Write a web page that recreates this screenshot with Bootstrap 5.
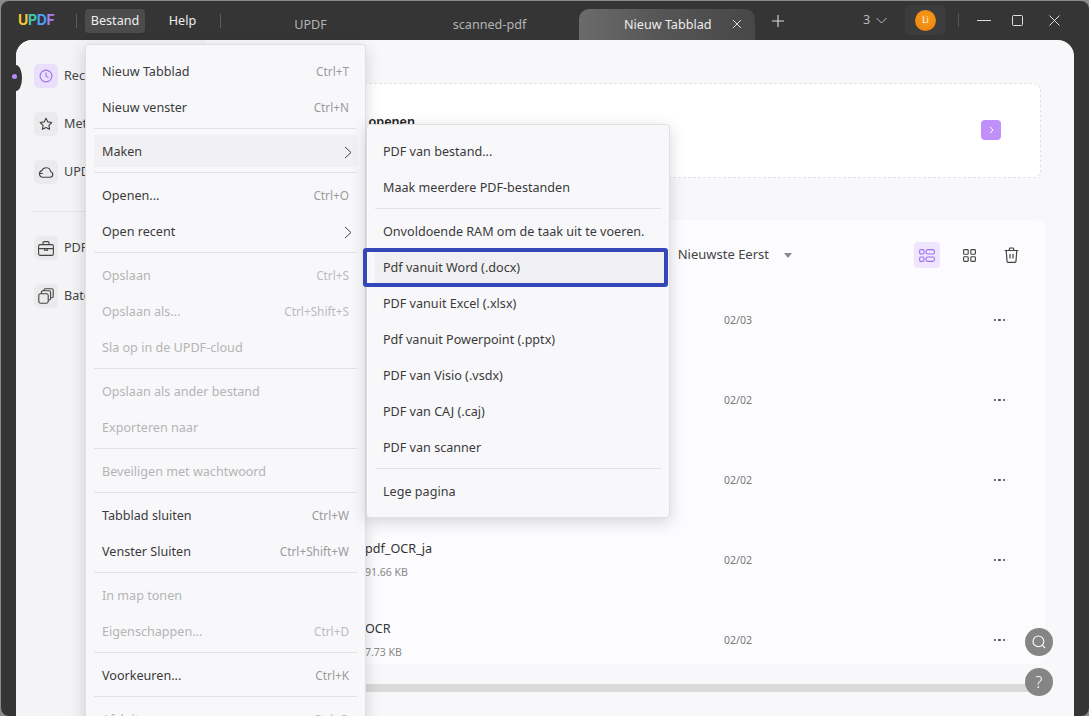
<!DOCTYPE html>
<html lang="nl">
<head>
<meta charset="utf-8">
<title>UPDF</title>
<link href="https://cdn.jsdelivr.net/npm/bootstrap@5.3.0/dist/css/bootstrap.min.css" rel="stylesheet">
<style>
html,body{height:716px;overflow:hidden}
body{background:#8b8b8b;font-family:"Noto Sans","Liberation Sans",sans-serif;font-size:12.6px;color:#333}
.win{height:715px;margin:1px 0 0 1px;background:#353535;border-radius:8px;position:relative;overflow:hidden}
.titlebar{height:39px;color:#e6e6e6}
.logo{width:84px;padding-left:17px;font-family:"Inter",sans-serif;font-weight:700;font-size:14px;letter-spacing:-.3px;padding-bottom:2px}
.lu{color:#f7c52d}.lp{color:#3fc9a6}.ld{color:#4e9ff0}.lf{color:#a77ff2}
.barcell{height:39px}
.vsep{width:1px;height:14px;background:#5c5c5c}
.vsep-logo{margin-left:-9px;margin-right:8px}
.menubtn{height:24px;border-radius:4px;color:#eee;padding-top:2px}
.menubtn-on{background:#4c4c4c;width:60px}
.menubtn-off{width:41px;margin-left:17px}
.sep-end{margin-left:17px}
.tabcell{height:31px;color:#b4b4b4;width:179px;margin-top:8px;padding-top:2px}
.tabcell-on{width:176px;color:#ededed;background:linear-gradient(90deg,#6b6b6b,#565656 45%,#474747);border-radius:10px 10px 0 0}
.tablabel{margin-left:45px}
.tabx{left:153px;top:10px}
.plus{margin:14px 0 0 17px}
.counter{margin-left:79px;height:39px;width:27px;color:#bbb}
.counter svg{margin-left:6px}
.avatar-tile{width:41px;height:30px;margin:4px 0 0 15px;background:#3c3c3c;border-radius:5px}
.avatar-dot{width:21px;height:21px;border-radius:50%;background:radial-gradient(circle at 50% 40%,#f49a1f,#ee8207);color:#fff;font-size:8px}
.sep-win{margin:12px 0 0 12px;background:#555}
.wmin{margin:14px 0 0 18px}
.wmax{margin:14px 0 0 21px}
.wclose{margin:14px 0 0 26px}
.pagebody{margin-left:15px;margin-right:15px;height:676px;background:#f8f8fa;border-radius:16px 16px 0 0;overflow:hidden}
.sidecol{width:190px;background:#f4f4f6;padding-top:24px}
.siderow{height:24px;margin:0 0 24px 18px;gap:6px;color:#444;white-space:nowrap}
.tile{width:24px;height:24px;border-radius:5px;background:#ebebed}
.tile-on{background:#eadffb}
.siderule{height:1px;background:#e6e6e8;margin:27px 24px 24px 16px}
.notch{position:absolute;left:15px;top:64px;width:6px;height:26px;background:#353535;border-radius:0 100% 100% 0/0 50% 50% 0}
.notchdot{position:absolute;left:11px;top:73px;width:5px;height:5px;border-radius:50%;background:#b78af5}
.maincol{padding:43px 33px 0 0}
.dropbox{height:95px;background:#fff;border:1px dashed #e1e1e4;border-radius:8px;padding-right:39px}
.dropbox-title{padding-left:108px;font-weight:600;padding-bottom:17px;color:#222}
.gobtn{width:20px;height:20px;border-radius:4px;background:#c08ffa;color:#fff;margin-bottom:2px}
.listcard{margin-top:42px;margin-right:-4px;height:444px;background:#fcfcfe;border-radius:8px;padding:22px 21px 0 0}
.toolrow{height:26px}
.sorter{margin-right:106px;color:#444;font-size:13px}
.caret-tri{width:0;height:0;border:4px solid transparent;border-top:5px solid #8a8a8a;border-bottom:0;margin-left:15px}
.tool{width:26px;height:26px;border-radius:4px;margin-left:16px}
.tool-on{background:#efe6fd}
.rowgap{height:12px}
.filerow{height:80px;padding-right:19px}
.fname{width:518px;flex-shrink:0;padding-left:159px;color:#333;line-height:1}
.fsize{margin-top:11px;font-size:10.5px;color:#888}
.fdate{font-size:10.5px;color:#777;flex:1;padding-top:2px}
.dots{width:11px;height:3px;flex-shrink:0;justify-content:space-between}
.dots i{display:block;width:2.4px;height:2.4px;background:#444;border-radius:50%}
.scrolltrack{height:8px;background:#dadada;margin-top:20px;margin-right:12px}
.floatbtn{position:absolute;left:1024px;width:28px;height:28px;border-radius:50%;background:#858585;color:#fff;font-size:16px;font-weight:300}
.fb-search{top:627px}
.fb-help{top:667px}
.appmenu.dropdown-menu{display:block;position:absolute;border:1px solid #e0e0e4;border-radius:4px;background:#f8f8fb;box-shadow:0 4px 16px rgba(0,0,0,.16);min-width:0;margin:0;color:#3a3a3a}
.m-file{left:84px;top:43px;width:281px;height:700px;padding:8px}
.m-make{left:365px;top:123px;width:304px;padding:8px;z-index:1001}
.appmenu .dropdown-item{height:36px;padding:2px 8px 0;display:flex;align-items:center;justify-content:space-between;color:#3a3a3a;border-radius:4px;font-size:12.6px;background:transparent}
.appmenu .dropdown-item.disabled{color:#b4b4b4}
.appmenu .item-hover{background:linear-gradient(#f8f8fb 2px,#f1f1f3 2px,#f1f1f3 34px,#f8f8fb 34px)}
.appmenu .dropdown-divider{margin:3px 0 4px;border-top:1px solid #e3e3e6;opacity:1}
.keys{font-size:11.8px;color:#9b9b9b}
.disabled .keys{color:#bbb}
.chev{margin-right:-3px}
.appmenu .item-mark{position:relative;background:#f0f0f2;border-radius:0;width:calc(100% + 3px)}
.bluebox{position:absolute;left:-12px;right:-4px;top:-1px;bottom:-2px;border:4px solid #3547b8;border-radius:3px;pointer-events:none}
svg{display:block}
</style>
</head>
<body>
<div class="win">
  <div class="titlebar d-flex align-items-start">
    <div class="barcell d-flex align-items-center">
      <div class="logo"><span class="lu">U</span><span class="lp">P</span><span class="ld">D</span><span class="lf">F</span></div>
    </div>
    <div class="barcell d-flex align-items-center">
      <div class="vsep vsep-logo"></div>
      <div class="menubtn menubtn-on d-flex align-items-center justify-content-center">Bestand</div>
      <div class="menubtn menubtn-off d-flex align-items-center justify-content-center">Help</div>
      <div class="vsep sep-end"></div>
    </div>
    <div class="tabcell d-flex align-items-center justify-content-center">UPDF</div>
    <div class="tabcell d-flex align-items-center justify-content-center">scanned-pdf</div>
    <div class="tabcell tabcell-on d-flex align-items-center position-relative">
      <span class="tablabel">Nieuw Tabblad</span>
      <svg class="position-absolute tabx" width="10" height="10" viewBox="0 0 10 10" fill="none" stroke="#ddd" stroke-width="1"><path d="M1 1l8 8M9 1l-8 8"/></svg>
    </div>
    <svg class="plus" width="12" height="12" viewBox="0 0 12 12" fill="none" stroke="#ddd" stroke-width="1.1"><path d="M6 0v12M0 6h12"/></svg>
    <div class="counter d-flex align-items-center">3
      <svg width="11" height="7" viewBox="0 0 11 7" fill="none" stroke="#bbb"><path d="M.5 1l5 5 5-5"/></svg>
    </div>
    <div class="avatar-tile d-flex align-items-center justify-content-center"><div class="avatar-dot d-flex align-items-center justify-content-center">Li</div></div>
    <div class="vsep sep-win"></div>
    <svg class="wmin" width="14" height="12" viewBox="0 0 14 12" fill="none" stroke="#ddd"><path d="M0 5.5h14"/></svg>
    <svg class="wmax" width="11" height="11" viewBox="0 0 11 11" fill="none" stroke="#ddd"><rect x=".5" y=".5" width="10" height="10" rx="1"/></svg>
    <svg class="wclose" width="11" height="11" viewBox="0 0 11 11" fill="none" stroke="#ddd"><path d="M.5.5l10 10M10.5.5l-10 10"/></svg>
  </div>

  <div class="pagebody d-flex">
    <div class="sidecol flex-shrink-0">
      <div class="siderow d-flex align-items-center"><div class="tile tile-on d-flex align-items-center justify-content-center"><svg width="14" height="14" viewBox="0 0 14 14" fill="none" stroke="#a06ff0" stroke-width="1.1"><circle cx="7" cy="7" r="5.9"/><path d="M7 3.4V7l2.4 1.6"/></svg></div>Recent</div>
      <div class="siderow d-flex align-items-center"><div class="tile d-flex align-items-center justify-content-center"><svg width="14" height="14" viewBox="0 0 14 14" fill="none" stroke="#444" stroke-width="1.1" stroke-linejoin="round"><path d="M7 1.2l1.8 3.7 4 .6-2.9 2.8.7 4L7 10.4l-3.6 1.9.7-4L1.2 5.5l4-.6z"/></svg></div>Met ster</div>
      <div class="siderow d-flex align-items-center"><div class="tile d-flex align-items-center justify-content-center"><svg width="16" height="14" viewBox="0 0 16 14" fill="none" stroke="#444" stroke-width="1.1" stroke-linejoin="round"><path d="M4.2 12.2h8a2.8 2.8 0 0 0 .5-5.5 4.6 4.6 0 0 0-8.8-1.1 3.4 3.4 0 0 0 .3 6.6z"/><path d="M1.2 8.5h3.6"/></svg></div>UPDF Cloud</div>
      <div class="siderule"></div>
      <div class="siderow d-flex align-items-center"><div class="tile d-flex align-items-center justify-content-center"><svg width="16" height="15" viewBox="0 0 16 15" fill="none" stroke="#444" stroke-width="1.1"><rect x=".6" y="3.6" width="14.8" height="10.8" rx="1.6"/><path d="M5 3.6V1.8c0-.7.4-1.2 1.1-1.2h3.8c.7 0 1.1.5 1.1 1.2v1.8M.6 7.6h14.8M6.5 7.6v1.6h3V7.6"/></svg></div>PDF-tools</div>
      <div class="siderow d-flex align-items-center"><div class="tile d-flex align-items-center justify-content-center"><svg width="16" height="16" viewBox="0 0 16 16" fill="none" stroke="#444" stroke-width="1.1"><rect x=".8" y="5.8" width="9.4" height="9.4" rx="1.6"/><path d="M3.4 5.8V4.2c0-.8.6-1.4 1.4-1.4h6.4c.8 0 1.4.6 1.4 1.4v6.4c0 .8-.6 1.4-1.4 1.4h-1M6 2.8V2c0-.7.5-1.2 1.2-1.2h6.6c.8 0 1.4.6 1.4 1.4v6.4c0 .8-.5 1.2-1.2 1.2h-.8"/></svg></div>Batch</div>
    </div>
    <div class="maincol flex-grow-1">
      <div class="dropbox d-flex align-items-center justify-content-between">
        <div class="dropbox-title">Bestand openen</div>
        <div class="gobtn d-flex align-items-center justify-content-center"><svg width="5" height="8" viewBox="0 0 5 8" fill="none" stroke="#fff"><path d="M1 .8L4 4 1 7.2"/></svg></div>
      </div>
      <div class="listcard">
        <div class="toolrow d-flex align-items-center justify-content-end">
          <div class="sorter d-flex align-items-center">Nieuwste Eerst<span class="caret-tri"></span></div>
          <div class="tool tool-on d-flex align-items-center justify-content-center"><svg width="16" height="13" viewBox="0 0 16 13" fill="none" stroke="#a06ff0" stroke-width="1.1"><rect x=".6" y=".6" width="4.4" height="4.4" rx="1.4"/><rect x=".6" y="8" width="4.4" height="4.4" rx="1.4"/><rect x="7" y=".6" width="8.4" height="4.4" rx="1.6"/><rect x="7" y="8" width="8.4" height="4.4" rx="1.6"/></svg></div>
          <div class="tool d-flex align-items-center justify-content-center"><svg width="13" height="13" viewBox="0 0 13 13" fill="none" stroke="#444" stroke-width="1.1"><rect x=".6" y=".6" width="4.6" height="4.6" rx=".8"/><rect x="7.8" y=".6" width="4.6" height="4.6" rx=".8"/><rect x=".6" y="7.8" width="4.6" height="4.6" rx=".8"/><rect x="7.8" y="7.8" width="4.6" height="4.6" rx=".8"/></svg></div>
          <div class="tool d-flex align-items-center justify-content-center"><svg width="15" height="16" viewBox="0 0 15 16" fill="none" stroke="#444" stroke-width="1.2" stroke-linejoin="round"><path d="M.6 3.5h13.8M5 3.5L5.8 1h3.4l.8 2.5M2.2 3.5l.8 10.5c0 .8.5 1.3 1.2 1.3h6.6c.7 0 1.2-.5 1.2-1.3l.8-10.5M6 7v4.6M9 7v4.6"/></svg></div>
        </div>
        <div class="rowgap"></div>
        <div class="filerow d-flex align-items-center"><div class="fname"></div><div class="fdate">02/03</div><div class="dots d-flex"><i></i><i></i><i></i></div></div>
        <div class="filerow d-flex align-items-center"><div class="fname"></div><div class="fdate">02/02</div><div class="dots d-flex"><i></i><i></i><i></i></div></div>
        <div class="filerow d-flex align-items-center"><div class="fname"></div><div class="fdate">02/02</div><div class="dots d-flex"><i></i><i></i><i></i></div></div>
        <div class="filerow d-flex align-items-center"><div class="fname"><div>pdf_OCR_ja</div><div class="fsize">91.66 KB</div></div><div class="fdate">02/02</div><div class="dots d-flex"><i></i><i></i><i></i></div></div>
        <div class="filerow d-flex align-items-center"><div class="fname"><div>OCR</div><div class="fsize">7.73 KB</div></div><div class="fdate">02/02</div><div class="dots d-flex"><i></i><i></i><i></i></div></div>
      </div>
      <div class="scrolltrack"></div>
    </div>
  </div>

  <div class="notch"></div>
  <div class="notchdot"></div>
  <div class="floatbtn fb-search d-flex align-items-center justify-content-center"><svg width="14" height="14" viewBox="0 0 14 14" fill="none" stroke="#fff" stroke-width="1.1"><circle cx="6.4" cy="6.4" r="5.4"/><path d="M10.4 10.4l2.6 2.6"/></svg></div>
  <div class="floatbtn fb-help d-flex align-items-center justify-content-center">?</div>

  <div class="dropdown-menu appmenu m-file">
    <a class="dropdown-item" href="#">Nieuw Tabblad<span class="keys">Ctrl+T</span></a>
    <a class="dropdown-item" href="#">Nieuw venster<span class="keys">Ctrl+N</span></a>
    <hr class="dropdown-divider">
    <a class="dropdown-item item-hover" href="#">Maken<svg class="chev" width="8" height="13" viewBox="0 0 8 13" fill="none" stroke="#444"><path d="M1 1l6 5.5L1 12"/></svg></a>
    <hr class="dropdown-divider">
    <a class="dropdown-item" href="#">Openen...<span class="keys">Ctrl+O</span></a>
    <a class="dropdown-item" href="#">Open recent<svg class="chev" width="8" height="13" viewBox="0 0 8 13" fill="none" stroke="#444"><path d="M1 1l6 5.5L1 12"/></svg></a>
    <hr class="dropdown-divider">
    <a class="dropdown-item disabled" href="#">Opslaan<span class="keys">Ctrl+S</span></a>
    <a class="dropdown-item disabled" href="#">Opslaan als...<span class="keys">Ctrl+Shift+S</span></a>
    <a class="dropdown-item disabled" href="#">Sla op in de UPDF-cloud</a>
    <hr class="dropdown-divider">
    <a class="dropdown-item disabled" href="#">Opslaan als ander bestand</a>
    <a class="dropdown-item disabled" href="#">Exporteren naar</a>
    <hr class="dropdown-divider">
    <a class="dropdown-item disabled" href="#">Beveiligen met wachtwoord</a>
    <hr class="dropdown-divider">
    <a class="dropdown-item" href="#">Tabblad sluiten<span class="keys">Ctrl+W</span></a>
    <a class="dropdown-item" href="#">Venster Sluiten<span class="keys">Ctrl+Shift+W</span></a>
    <hr class="dropdown-divider">
    <a class="dropdown-item disabled" href="#">In map tonen</a>
    <a class="dropdown-item disabled" href="#">Eigenschappen...<span class="keys">Ctrl+D</span></a>
    <hr class="dropdown-divider">
    <a class="dropdown-item" href="#">Voorkeuren...<span class="keys">Ctrl+K</span></a>
    <hr class="dropdown-divider">
    <a class="dropdown-item disabled" href="#">Afsluiten<span class="keys">Ctrl+Q</span></a>
  </div>

  <div class="dropdown-menu appmenu m-make">
    <a class="dropdown-item" href="#">PDF van bestand...</a>
    <a class="dropdown-item" href="#">Maak meerdere PDF-bestanden</a>
    <hr class="dropdown-divider">
    <a class="dropdown-item" href="#">Onvoldoende RAM om de taak uit te voeren.</a>
    <a class="dropdown-item item-mark" href="#">Pdf vanuit Word (.docx)<span class="bluebox"></span></a>
    <a class="dropdown-item" href="#">PDF vanuit Excel (.xlsx)</a>
    <a class="dropdown-item" href="#">Pdf vanuit Powerpoint (.pptx)</a>
    <a class="dropdown-item" href="#">PDF van Visio (.vsdx)</a>
    <a class="dropdown-item" href="#">PDF van CAJ (.caj)</a>
    <a class="dropdown-item" href="#">PDF van scanner</a>
    <hr class="dropdown-divider">
    <a class="dropdown-item" href="#">Lege pagina</a>
  </div>
</div>
<script src="https://cdn.jsdelivr.net/npm/bootstrap@5.3.0/dist/js/bootstrap.bundle.min.js"></script>
</body>
</html>
